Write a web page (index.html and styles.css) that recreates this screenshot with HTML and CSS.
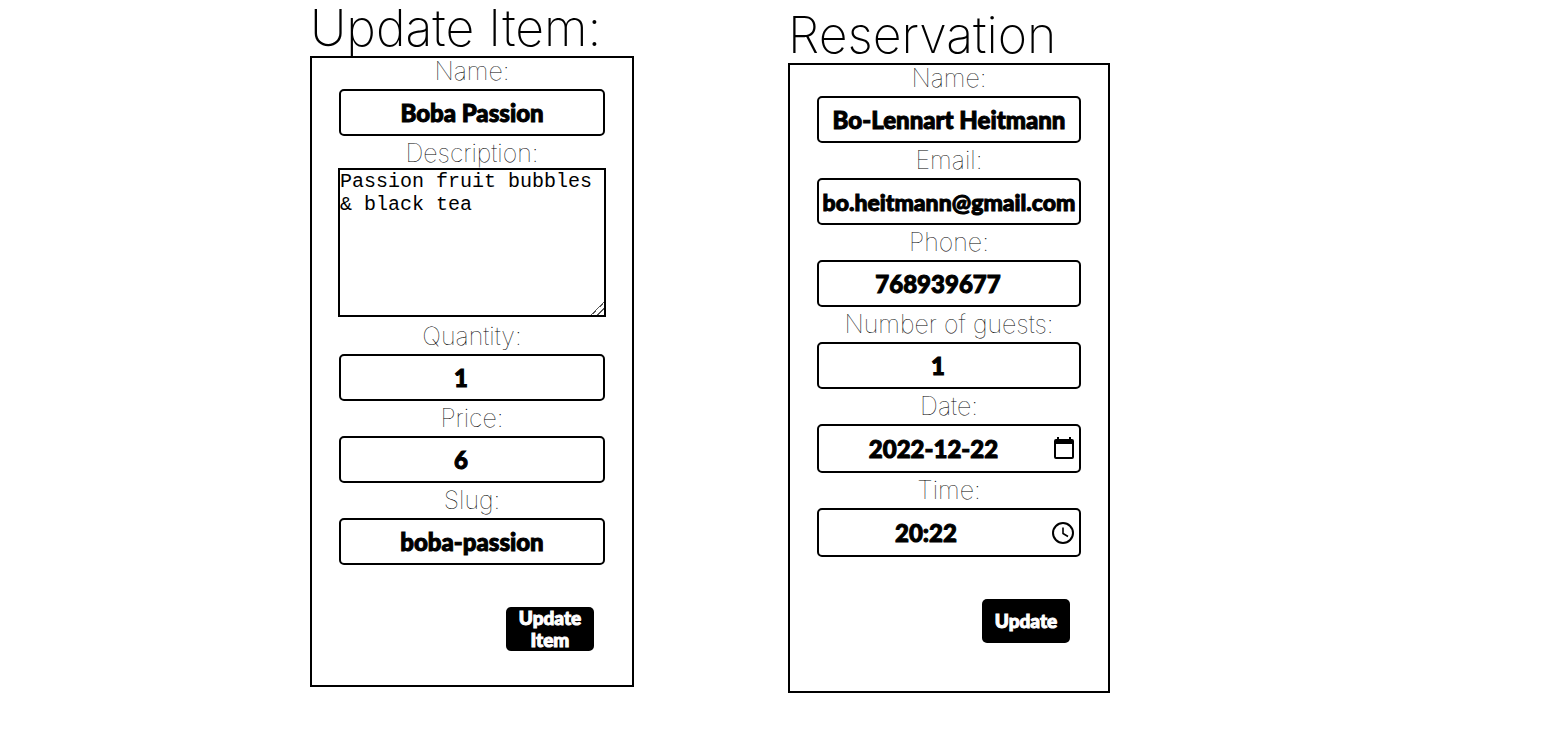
FILE: index.html
```html
<!DOCTYPE html>
<html lang="en">
<head>
<meta charset="utf-8">
<title>Update Item and Reservation</title>
<link rel="stylesheet" href="styles.css">
</head>
<body>
<main class="page">
  <section class="panel panel-item">
    <h1 class="title">Update Item:</h1>
    <form class="card">
      <div class="field">
        <label class="label" for="item-name">Name:</label>
        <input class="input" id="item-name" type="text" value="Boba Passion">
      </div>
      <div class="field">
        <label class="label" for="item-description">Description:</label>
        <textarea class="textarea" id="item-description">Passion fruit bubbles &amp; black tea</textarea>
      </div>
      <div class="field">
        <label class="label" for="item-quantity">Quantity:</label>
        <input class="input input-number" id="item-quantity" type="number" value="1">
      </div>
      <div class="field">
        <label class="label" for="item-price">Price:</label>
        <input class="input input-number" id="item-price" type="number" value="6">
      </div>
      <div class="field">
        <label class="label" for="item-slug">Slug:</label>
        <input class="input" id="item-slug" type="text" value="boba-passion">
      </div>
      <button class="submit" type="submit">Update Item</button>
    </form>
  </section>

  <section class="panel panel-reservation">
    <h1 class="title">Reservation</h1>
    <form class="card">
      <div class="field">
        <label class="label" for="guest-name">Name:</label>
        <input class="input" id="guest-name" type="text" value="Bo-Lennart Heitmann">
      </div>
      <div class="field">
        <label class="label" for="guest-email">Email:</label>
        <input class="input input-email" id="guest-email" type="email" value="bo.heitmann@gmail.com">
      </div>
      <div class="field">
        <label class="label" for="guest-phone">Phone:</label>
        <input class="input input-number" id="guest-phone" type="number" value="768939677">
      </div>
      <div class="field">
        <label class="label" for="guest-count">Number of guests:</label>
        <input class="input input-number" id="guest-count" type="number" value="1">
      </div>
      <div class="field">
        <label class="label" for="guest-date">Date:</label>
        <div class="picker">
          <input class="picker-input" id="guest-date" type="text" value="2022-12-22">
          <button class="picker-button picker-date" type="button" aria-label="Choose date">
            <svg width="20" height="23" viewBox="0 0 20 23"><path d="M4 0v4M16 0v4" stroke="#000" stroke-width="2"/><path d="M2 2h16a2 2 0 0 1 2 2v16a2 2 0 0 1-2 2H2a2 2 0 0 1-2-2V4a2 2 0 0 1 2-2zM2 7v13h16V7z" fill="#000" fill-rule="evenodd"/></svg>
          </button>
        </div>
      </div>
      <div class="field">
        <label class="label" for="guest-time">Time:</label>
        <div class="picker">
          <input class="picker-input" id="guest-time" type="text" value="20:22">
          <button class="picker-button picker-time" type="button" aria-label="Choose time">
            <svg width="22" height="22" viewBox="0 0 22 22" fill="none" stroke="#000"><circle cx="11" cy="11" r="10" stroke-width="2"/><path d="M11 5.500v6l5 3" stroke-width="1.600"/></svg>
          </button>
        </div>
      </div>
      <button class="submit" type="submit">Update</button>
    </form>
  </section>
</main>
</body>
</html>
```
FILE: styles.css
```css
* {
  box-sizing: border-box;
}

body {
  margin: 0;
  background: #fff;
  color: #000;
  font-family: Inter, "Liberation Sans", sans-serif;
}

.page {
  display: flex;
  align-items: flex-start;
  gap: 154px;
  padding-left: 20%;
}

.panel {
  flex: 0 1 324px;
  min-width: 0;
}

.panel-reservation {
  flex-basis: 322px;
  padding-top: 7px;
}

.title {
  margin: 0;
  font-size: 50px;
  font-weight: 200;
  line-height: 56px;
  white-space: nowrap;
}

.card {
  display: flex;
  flex-direction: column;
  gap: 4px;
  padding: 0 27px 34px;
  border: 2px solid #000;
}

.panel-reservation .card {
  padding-bottom: 48px;
}

.field {
  display: flex;
  flex-direction: column;
}

.label {
  padding-bottom: 4px;
  font-size: 25px;
  font-weight: 100;
  line-height: 27px;
  text-align: center;
  white-space: nowrap;
}

.input,
.picker {
  width: 100%;
  height: 47px;
  border: 2px solid #000;
  border-radius: 5px;
  background: #fff;
}

.input,
.picker-input {
  padding: 0;
  color: #000;
  font-family: "Lato Black", Lato, sans-serif;
  font-size: 24px;
  font-weight: 900;
  text-align: center;
  -webkit-text-stroke: 1px #000;
}

.input-number {
  padding-right: 22px;
  appearance: textfield;
}

.input-number::-webkit-inner-spin-button {
  display: none;
}

.input-email {
  font-size: 23px;
}

.textarea {
  height: 149px;
  margin: -3px -1px 2px;
  padding: 0;
  border: 2px solid #000;
  color: #000;
  background: #fff;
  font-family: "Liberation Mono", monospace;
  font-size: 20px;
  line-height: 23px;
  resize: both;
}

.textarea::-webkit-resizer {
  background: linear-gradient(135deg, transparent 54%, #555 54% 60%, transparent 60% 76%, #555 76% 82%, transparent 82%);
}

.picker {
  display: flex;
  align-items: center;
  height: 49px;
}

.picker-input {
  flex: 1;
  min-width: 0;
  border: 0;
  background: none;
}

.picker-button {
  display: flex;
  justify-content: flex-end;
  padding: 0 5px 0 0;
  border: 0;
  background: none;
}

.picker-date {
  width: 31px;
}

.picker-time {
  width: 46px;
}

.submit {
  align-self: flex-end;
  width: 88px;
  height: 44px;
  margin: 38px 11px 0 0;
  padding: 0 10px;
  border: 0;
  border-radius: 5px;
  background: #000;
  color: #fff;
  font-family: "Lato Black", Lato, sans-serif;
  font-size: 19px;
  font-weight: 900;
  line-height: 22px;
  -webkit-text-stroke: 1px #fff;
}
```
